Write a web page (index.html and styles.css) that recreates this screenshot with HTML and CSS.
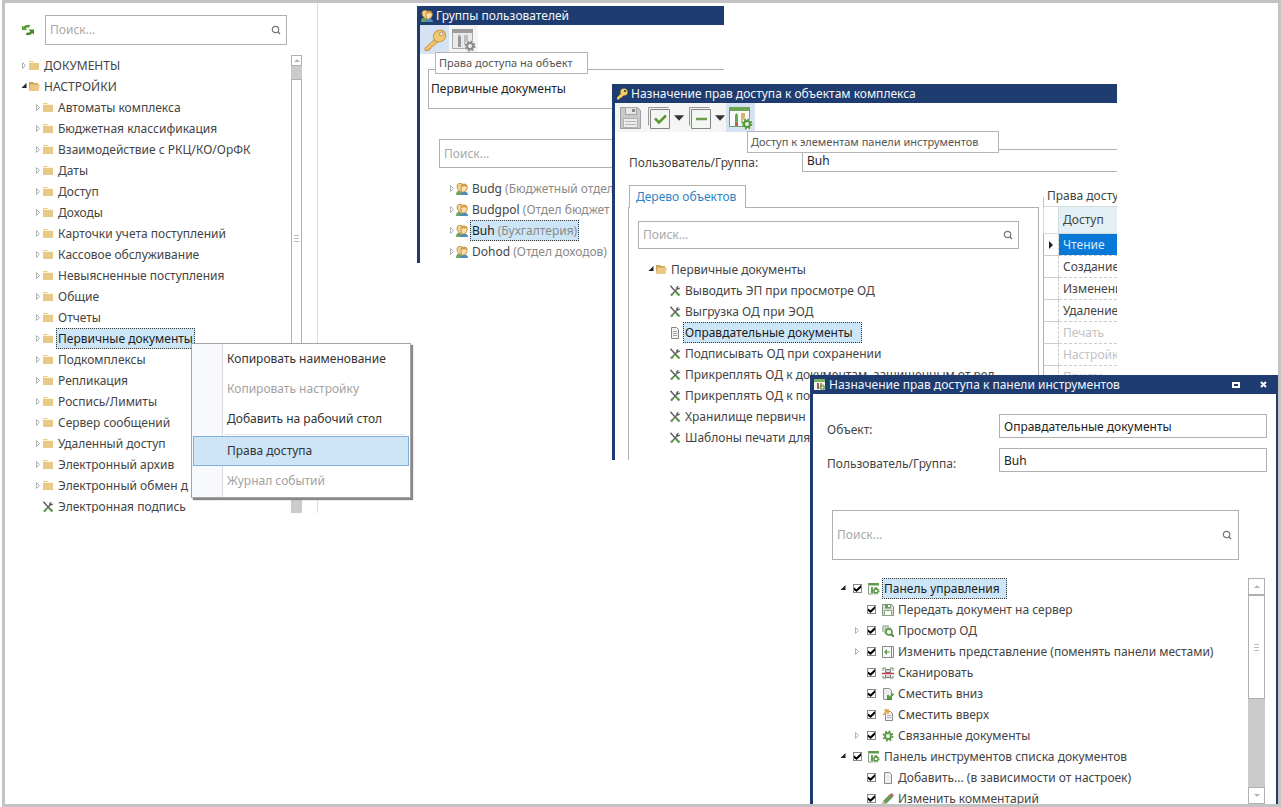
FILE: index.html
```html
<!DOCTYPE html>
<html lang="ru">
<head>
<meta charset="utf-8">
<title>Назначение прав доступа</title>
<link rel="stylesheet" href="styles.css">
</head>
<body>
<svg class="sprite" aria-hidden="true">
  <symbol id="closed" viewBox="0 0 8 12"><path d="M2.500 2.500v6l3-3z" fill="none" stroke="#b0b0b0"/></symbol>
  <symbol id="opened" viewBox="0 0 8 12"><path d="M6.500 2v5h-5z" fill="#222"/></symbol>
  <symbol id="folder" viewBox="0 1 12 12"><path d="M1 2h4l1 1h5v8H1z" fill="#e9c987"/><path d="M1 3.500h10" stroke="#fff4d8"/></symbol>
  <symbol id="folder-open" viewBox="0 1 12 12"><path d="M1 2h4l1 1h4v7H1z" fill="#cda45a"/><path d="M2.500 4.500H12L10.500 11H1z" fill="#ebc981"/></symbol>
  <symbol id="tools" viewBox="0 0 12 12"><path d="M2 1.500l8 8.500" stroke="#666" stroke-width="1.500"/><path d="M1 1l2 .5" stroke="#555"/><path d="M8.500 3.500L2 10.500" stroke="#666" stroke-width="1.500"/><path d="M7 3Q7.500 .8 10 1L8.800 2.300l1 1L11.300 2Q11 4.800 8.500 4.500z" fill="#555"/><path d="M7 7l3.500 3.500" stroke="#5c9a48" stroke-width="2.200"/><path d="M4 8.500l-2 2" stroke="#5c9a48" stroke-width="2"/></symbol>
  <symbol id="page" viewBox="0 0 12 12"><path d="M2.500.5h5l2 2v9h-7z" fill="#f2f2f2" stroke="#858585"/><path d="M4 4.500h4M4 6.500h4M4 8.500h4" stroke="#a5a5a5"/></symbol>
  <symbol id="page-plain" viewBox="0 0 12 12"><path d="M2.500.5h5l2 2v9h-7z" fill="#ededed" stroke="#8a8a8a"/></symbol>
  <symbol id="search" viewBox="0 0 12 12"><circle cx="5.500" cy="5.500" r="3.200" fill="none" stroke="#777" stroke-width="1.200"/><path d="M7.800 7.800L10 10" stroke="#777" stroke-width="1.500"/></symbol>
  <symbol id="refresh" viewBox="0 0 14 14"><path d="M1 7V2.500l1.500 1.200Q5 1 9.500 2.200L8 4.500Q5.500 4 4.700 5.600L6.200 7z" fill="#5b9d38"/><path d="M13 6.500V11.500l-1.700-1.300Q9 13 4.500 11.800L6 9.500Q8.500 10 9.300 8.400L7.500 6.500z" fill="#4a8a2c"/></symbol>
  <symbol id="users" viewBox="0 0 12 12"><path d="M0 12Q0 8 3 7.500L6 10v2z" fill="#6aa85a"/><path d="M4 12Q4 8.500 8 8.500T12 12z" fill="#4d8cba"/><path d="M1 4Q1 0 4 .5Q7-.5 6.500 5T3.500 8T1 4z" fill="#f3d192" stroke="#b5802f" stroke-width=".8"/><path d="M5 4.500Q4.500 1 8 1t3.300 3.500T8 9T5 4.500z" fill="#fae0b0" stroke="#b5802f" stroke-width=".8"/><path d="M5 4Q5 .5 8 .8T11.300 4Q8 2.500 5 4" fill="#d39b45"/></symbol>
  <symbol id="key" viewBox="0 0 24 24"><path d="M12.500 10.500L2 20v2.500h4v-2h2v-2h2l4.500-4.500z" fill="#efc468" stroke="#c2994f"/><ellipse cx="16.500" cy="8" rx="6.500" ry="5.800" transform="rotate(-40 16.500 8)" fill="#f1c970" stroke="#c2994f"/><circle cx="18.500" cy="6" r="2" fill="#dce6f4" stroke="#c2994f"/></symbol>
  <symbol id="key-small" viewBox="0 0 12 12"><path d="M6 4.500L1 9.500v2h2.500v-1.500H5L8 7z" fill="#f2cc54"/><circle cx="8" cy="4" r="3.600" fill="#f2cc54"/><circle cx="9" cy="3" r="1.100" fill="#1e3c70"/></symbol>
  <symbol id="gear" viewBox="0 0 12 12"><g fill="none" stroke="currentColor"><circle cx="6" cy="6" r="3" stroke-width="2"/><circle cx="6" cy="6" r="4.700" stroke-width="1.500" stroke-dasharray="2 1.690"/></g></symbol>
  <symbol id="panel-gray" viewBox="0 0 24 24"><path d="M.5 1.500h20v19H.5z" fill="#e9e9e9" stroke="#aaa"/><path d="M0 1h21v4H0z" fill="#9c9c9c"/><path d="M6 8.500l1.500-2L9 8.500V19H6z" fill="#999"/><path d="M12 7h4v12h-4z" fill="#bdbdbd"/><circle cx="18" cy="18" r="6" fill="#eee"/><use href="#gear" x="12" y="12" width="12" height="12" color="#888"/></symbol>
  <symbol id="panel" viewBox="0 0 24 24"><path d="M.5 1.500h20v19H.5z" fill="#f7faf6" stroke="#769b6c"/><path d="M0 1h21v4H0z" fill="#6aa653"/><path d="M6 9l1.500-2L9 9v8H6z" fill="#6aa653"/><path d="M6 17h3v3H6z" fill="#c75663"/><path d="M12 7h4v12h-4z" fill="#d3b56f"/><circle cx="18" cy="18" r="6" fill="#e6efed"/><use href="#gear" x="12" y="12" width="12" height="12" color="#559739"/></symbol>
  <symbol id="panel-small" viewBox="0 0 12 12"><path d="M0 0h11v2.500H0z" fill="#5f9a4e"/><path d="M.5 3v8h5" fill="#f5f8f3" stroke="#7d9976"/><path d="M3 4h2v6H3z" fill="#699c59"/><path d="M7 4h2v2H7z" fill="#b99b72"/><use href="#gear" x="4" y="4" width="8" height="8" color="#4f9438"/></symbol>
  <symbol id="panel-title" viewBox="0 0 12 12"><path d="M0 0h11v11H0z" fill="#f2f7ef"/><path d="M0 0h11v3H0z" fill="#79b25f"/><path d="M3 4h2v6H3z" fill="#a35c5c"/><path d="M6 4h2v4H6z" fill="#b99b72"/><use href="#gear" x="5" y="5" width="7" height="7" color="#4f9438"/></symbol>
  <symbol id="save-big" viewBox="0 0 22 22"><path d="M1.500.5h17l3 3v18h-20z" fill="#c8c8c8" stroke="#a0a0a0"/><path d="M6.500.5h11v7h-11z" fill="#e7e7e7" stroke="#a5a5a5"/><path d="M13 2h3v3h-3z" fill="#888"/><path d="M4.500 11.500h14v9h-14z" fill="#ededed" stroke="#b0b0b0"/><path d="M6 14.500h11M6 17.500h11" stroke="#b5b5b5"/></symbol>
  <symbol id="save-small" viewBox="0 0 12 12"><path d="M.5.5h9l2 2v9H.5z" fill="#d9e4d5" stroke="#7d967b"/><path d="M3 1h6v3.500H3z" fill="#759671"/><path d="M6 1h2v2H6z" fill="#fff"/><path d="M2.500 6.500h7v5h-7z" fill="#fff" stroke="#8aa586"/></symbol>
  <symbol id="check-all" viewBox="0 0 24 24"><path d="M1.500 19.500v-18h20" fill="none" stroke="#999"/><path d="M3.500 3.500h19v19h-19z" fill="#f4f6f3" stroke="#858585"/><path d="M8 12.500l4 4 7-7" fill="none" stroke="#5b982f" stroke-width="2.500"/></symbol>
  <symbol id="clear-all" viewBox="0 0 24 24"><path d="M1.500 19.500v-18h20" fill="none" stroke="#999"/><path d="M3.500 3.500h19v19h-19z" fill="#f4f6f3" stroke="#858585"/><path d="M8 13h11" stroke="#6a9c4a" stroke-width="2.500"/></symbol>
  <symbol id="down" viewBox="0 0 12 6"><path d="M0 0h11L5.500 6z" fill="#333"/></symbol>
  <symbol id="preview" viewBox="0 0 12 12"><path d="M1 7V1h6M3 9V3h6" fill="none" stroke="#75976b"/><circle cx="7" cy="7" r="3" fill="#f4faf0" stroke="#4f8d3b" stroke-width="1.400"/><path d="M9 9l3 3" stroke="#4f8d3b" stroke-width="2"/></symbol>
  <symbol id="layout" viewBox="0 0 12 12"><path d="M.5.5h11v11H.5zM9.500.5v11" fill="#fafafa" stroke="#828b7f"/><path d="M2 6l3-3v2.500h3v1H5V9z" fill="#5d9947"/></symbol>
  <symbol id="scan" viewBox="0 0 12 12"><path d="M1 4V1h3M8 1h3v3M1 9v2h3M8 11h3V9" fill="none" stroke="#668c5a"/><path d="M3.500 2.500h5v3h-5zM3.500 8v2.500h5V8" fill="#ddd" stroke="#777"/><path d="M0 6.500h12" stroke="#ce3e4b" stroke-width="1.600"/></symbol>
  <symbol id="move-down" viewBox="0 0 12 12"><path d="M1.500.5h6l2 2v9h-8z" fill="#ececec" stroke="#909090"/><path d="M11 5L7 9V7H5v5h5v-2H8.500L12 6.500z" fill="#4f983a"/></symbol>
  <symbol id="move-up" viewBox="0 0 12 12"><path d="M3.500 2.500h5l2 2v7h-7z" fill="#f2f2f2" stroke="#878787"/><path d="M5 8.500h4M5 6.500h4" stroke="#aaa"/><path d="M1 6l4-4M2 1h4v4" fill="none" stroke="#dea443" stroke-width="1.700"/></symbol>
  <symbol id="pencil" viewBox="0 0 12 12"><path d="M.5 11.500l1-3.500 6.500-6.500 2.500 2.500L4 10.500z" fill="#6a9e55" stroke="#4d6d42" stroke-width=".7"/><path d="M8 1.500L9.500 0 12 2.500 10.500 4z" fill="#c65b61"/><path d="M.5 11.500l1-3.500L4 10.500z" fill="#e3c391"/></symbol>
  <symbol id="current" viewBox="0 0 6 8"><path d="M1 0v8l4-4z" fill="#222"/></symbol>
  <symbol id="up-mark" viewBox="0 0 6 4"><path d="M0 3h6L3 0z" fill="#b5b5b5"/></symbol>
  <symbol id="down-mark" viewBox="0 0 6 4"><path d="M0 0h6L3 3z" fill="#b5b5b5"/></symbol>
</svg>

<main class="desktop">
  <aside class="navigator">
    <div class="navigator-head">
      <button class="plain" aria-label="Обновить"><svg class="i14"><use href="#refresh"/></svg></button>
      <label class="search search-nav"><input type="text" placeholder="Поиск..." aria-label="Поиск по настройкам"><svg class="i12"><use href="#search"/></svg></label>
    </div>
    <div class="navigator-body">
      <ul class="tree">
        <li class="row"><svg class="arrow"><use href="#closed"/></svg><svg class="i12"><use href="#folder"/></svg><span class="name">ДОКУМЕНТЫ</span></li>
        <li class="row"><svg class="arrow"><use href="#opened"/></svg><svg class="i12"><use href="#folder-open"/></svg><span class="name">НАСТРОЙКИ</span></li>
        <li class="row sub"><svg class="arrow"><use href="#closed"/></svg><svg class="i12"><use href="#folder"/></svg><span class="name">Автоматы комплекса</span></li>
        <li class="row sub"><svg class="arrow"><use href="#closed"/></svg><svg class="i12"><use href="#folder"/></svg><span class="name">Бюджетная классификация</span></li>
        <li class="row sub"><svg class="arrow"><use href="#closed"/></svg><svg class="i12"><use href="#folder"/></svg><span class="name">Взаимодействие с РКЦ/КО/ОрФК</span></li>
        <li class="row sub"><svg class="arrow"><use href="#closed"/></svg><svg class="i12"><use href="#folder"/></svg><span class="name">Даты</span></li>
        <li class="row sub"><svg class="arrow"><use href="#closed"/></svg><svg class="i12"><use href="#folder"/></svg><span class="name">Доступ</span></li>
        <li class="row sub"><svg class="arrow"><use href="#closed"/></svg><svg class="i12"><use href="#folder"/></svg><span class="name">Доходы</span></li>
        <li class="row sub"><svg class="arrow"><use href="#closed"/></svg><svg class="i12"><use href="#folder"/></svg><span class="name">Карточки учета поступлений</span></li>
        <li class="row sub"><svg class="arrow"><use href="#closed"/></svg><svg class="i12"><use href="#folder"/></svg><span class="name">Кассовое обслуживание</span></li>
        <li class="row sub"><svg class="arrow"><use href="#closed"/></svg><svg class="i12"><use href="#folder"/></svg><span class="name">Невыясненные поступления</span></li>
        <li class="row sub"><svg class="arrow"><use href="#closed"/></svg><svg class="i12"><use href="#folder"/></svg><span class="name">Общие</span></li>
        <li class="row sub"><svg class="arrow"><use href="#closed"/></svg><svg class="i12"><use href="#folder"/></svg><span class="name">Отчеты</span></li>
        <li class="row sub"><svg class="arrow"><use href="#closed"/></svg><svg class="i12"><use href="#folder"/></svg><span class="name selected">Первичные документы</span></li>
        <li class="row sub"><svg class="arrow"><use href="#closed"/></svg><svg class="i12"><use href="#folder"/></svg><span class="name">Подкомплексы</span></li>
        <li class="row sub"><svg class="arrow"><use href="#closed"/></svg><svg class="i12"><use href="#folder"/></svg><span class="name">Репликация</span></li>
        <li class="row sub"><svg class="arrow"><use href="#closed"/></svg><svg class="i12"><use href="#folder"/></svg><span class="name">Роспись/Лимиты</span></li>
        <li class="row sub"><svg class="arrow"><use href="#closed"/></svg><svg class="i12"><use href="#folder"/></svg><span class="name">Сервер сообщений</span></li>
        <li class="row sub"><svg class="arrow"><use href="#closed"/></svg><svg class="i12"><use href="#folder"/></svg><span class="name">Удаленный доступ</span></li>
        <li class="row sub"><svg class="arrow"><use href="#closed"/></svg><svg class="i12"><use href="#folder"/></svg><span class="name">Электронный архив</span></li>
        <li class="row sub"><svg class="arrow"><use href="#closed"/></svg><svg class="i12"><use href="#folder"/></svg><span class="name">Электронный обмен д</span></li>
        <li class="row sub"><span class="arrow"></span><svg class="i12"><use href="#tools"/></svg><span class="name">Электронная подпись</span></li>
      </ul>
      <div class="scroll scroll-nav" aria-hidden="true"><span class="cap"><svg class="mark"><use href="#up-mark"/></svg></span><span class="thumb"><i class="grip"></i></span></div>
    </div>
  </aside>

  <section class="window win-groups">
    <header class="title"><svg class="i12"><use href="#users"/></svg>Группы пользователей</header>
    <div class="toolbar">
      <button class="tool active" aria-label="Права доступа на объект"><svg class="i24"><use href="#key"/></svg></button>
      <button class="tool" aria-label="Элементы панели инструментов"><svg class="i24"><use href="#panel-gray"/></svg></button>
    </div>
    <div class="object-box">Первичные документы</div>
    <label class="search search-groups"><input type="text" placeholder="Поиск..." aria-label="Поиск группы"></label>
    <ul class="tree tree-groups">
      <li class="row"><svg class="arrow"><use href="#closed"/></svg><svg class="i12"><use href="#users"/></svg><span class="name">Budg <span class="note">(Бюджетный отдел)</span></span></li>
      <li class="row"><svg class="arrow"><use href="#closed"/></svg><svg class="i12"><use href="#users"/></svg><span class="name">Budgpol <span class="note">(Отдел бюджет</span></span></li>
      <li class="row"><svg class="arrow"><use href="#closed"/></svg><svg class="i12"><use href="#users"/></svg><span class="name selected">Buh <span class="note">(Бухгалтерия)</span></span></li>
      <li class="row"><svg class="arrow"><use href="#closed"/></svg><svg class="i12"><use href="#users"/></svg><span class="name">Dohod <span class="note">(Отдел доходов)</span></span></li>
    </ul>
    <div class="tip tip-object" role="tooltip">Права доступа на объект</div>
  </section>

  <section class="window win-objects">
    <header class="title"><svg class="i12"><use href="#key-small"/></svg>Назначение прав доступа к объектам комплекса</header>
    <div class="toolbar">
      <button class="tool" aria-label="Сохранить"><svg class="i22"><use href="#save-big"/></svg></button>
      <button class="tool" aria-label="Отметить все"><svg class="i24"><use href="#check-all"/></svg></button>
      <button class="tool drop" aria-label="Варианты отметки"><svg class="down"><use href="#down"/></svg></button>
      <button class="tool" aria-label="Снять отметки"><svg class="i24"><use href="#clear-all"/></svg></button>
      <button class="tool drop" aria-label="Варианты снятия"><svg class="down"><use href="#down"/></svg></button>
      <button class="tool active" aria-label="Доступ к элементам панели инструментов"><svg class="i24"><use href="#panel"/></svg></button>
    </div>
    <div class="user-line">
      <label for="user3">Пользователь/Группа:</label>
      <input id="user3" class="field" type="text" value="Buh">
    </div>
    <div class="columns">
      <div class="tabs">
        <button class="tab">Дерево объектов</button>
        <div class="tab-page">
          <label class="search search-objects"><input type="text" placeholder="Поиск..." aria-label="Поиск объекта"><svg class="i12"><use href="#search"/></svg></label>
          <ul class="tree tree-objects">
            <li class="row"><svg class="arrow"><use href="#opened"/></svg><svg class="i12"><use href="#folder-open"/></svg><span class="name">Первичные документы</span></li>
            <li class="row sub"><span class="arrow"></span><svg class="i12"><use href="#tools"/></svg><span class="name">Выводить ЭП при просмотре ОД</span></li>
            <li class="row sub"><span class="arrow"></span><svg class="i12"><use href="#tools"/></svg><span class="name">Выгрузка ОД при ЭОД</span></li>
            <li class="row sub"><span class="arrow"></span><svg class="i12"><use href="#page"/></svg><span class="name selected wide">Оправдательные документы</span></li>
            <li class="row sub"><span class="arrow"></span><svg class="i12"><use href="#tools"/></svg><span class="name">Подписывать ОД при сохранении</span></li>
            <li class="row sub"><span class="arrow"></span><svg class="i12"><use href="#tools"/></svg><span class="name">Прикреплять ОД к документам, защищенным от ред</span></li>
            <li class="row sub"><span class="arrow"></span><svg class="i12"><use href="#tools"/></svg><span class="name">Прикреплять ОД к по</span></li>
            <li class="row sub"><span class="arrow"></span><svg class="i12"><use href="#tools"/></svg><span class="name">Хранилище первичн</span></li>
            <li class="row sub"><span class="arrow"></span><svg class="i12"><use href="#tools"/></svg><span class="name">Шаблоны печати для</span></li>
          </ul>
        </div>
      </div>
      <div class="rights">
        <div class="legend">Права доступа</div>
        <table class="grid">
          <thead><tr><th class="mark-col"></th><th>Доступ</th></tr></thead>
          <tbody>
            <tr class="current"><td class="mark-col"><svg class="current-mark"><use href="#current"/></svg></td><td>Чтение</td></tr>
            <tr><td class="mark-col"></td><td>Создание</td></tr>
            <tr><td class="mark-col"></td><td>Изменение</td></tr>
            <tr><td class="mark-col"></td><td>Удаление</td></tr>
            <tr class="off"><td class="mark-col"></td><td>Печать</td></tr>
            <tr class="off"><td class="mark-col"></td><td>Настройка</td></tr>
            <tr class="off"><td class="mark-col"></td><td>Прием</td></tr>
          </tbody>
        </table>
      </div>
    </div>
    <div class="tip tip-panel" role="tooltip">Доступ к элементам панели инструментов</div>
  </section>

  <section class="window win-panel">
    <header class="title"><svg class="i12"><use href="#panel-title"/></svg><span class="grow">Назначение прав доступа к панели инструментов</span>
      <button class="win-btn" aria-label="Развернуть"><svg class="i8"><path d="M1 2h6v4H1z" fill="none" stroke="#fff" stroke-width="2"/></svg></button>
      <button class="win-btn" aria-label="Закрыть"><svg class="i8"><path d="M1 1l5 5M6 1L1 6" stroke="#fff" stroke-width="2"/></svg></button>
    </header>
    <div class="form">
      <label for="object4">Объект:</label><input id="object4" class="field" type="text" value="Оправдательные документы">
      <label for="user4">Пользователь/Группа:</label><input id="user4" class="field" type="text" value="Buh">
    </div>
    <label class="search search-panel"><input type="text" placeholder="Поиск..." aria-label="Поиск элемента"><svg class="i12"><use href="#search"/></svg></label>
    <div class="panel-body">
      <ul class="tree tree-panel">
        <li class="row"><svg class="arrow"><use href="#opened"/></svg><input class="tick" type="checkbox" id="c1" checked><svg class="i12"><use href="#panel-small"/></svg><label class="name selected near" for="c1">Панель управления</label></li>
        <li class="row sub"><span class="arrow"></span><input class="tick" type="checkbox" id="c2" checked><svg class="i12"><use href="#save-small"/></svg><label class="name" for="c2">Передать документ на сервер</label></li>
        <li class="row sub"><svg class="arrow"><use href="#closed"/></svg><input class="tick" type="checkbox" id="c3" checked><svg class="i12"><use href="#preview"/></svg><label class="name" for="c3">Просмотр ОД</label></li>
        <li class="row sub"><svg class="arrow"><use href="#closed"/></svg><input class="tick" type="checkbox" id="c4" checked><svg class="i12"><use href="#layout"/></svg><label class="name" for="c4">Изменить представление (поменять панели местами)</label></li>
        <li class="row sub"><span class="arrow"></span><input class="tick" type="checkbox" id="c5" checked><svg class="i12"><use href="#scan"/></svg><label class="name" for="c5">Сканировать</label></li>
        <li class="row sub"><span class="arrow"></span><input class="tick" type="checkbox" id="c6" checked><svg class="i12"><use href="#move-down"/></svg><label class="name" for="c6">Сместить вниз</label></li>
        <li class="row sub"><span class="arrow"></span><input class="tick" type="checkbox" id="c7" checked><svg class="i12"><use href="#move-up"/></svg><label class="name" for="c7">Сместить вверх</label></li>
        <li class="row sub"><svg class="arrow"><use href="#closed"/></svg><input class="tick" type="checkbox" id="c8" checked><svg class="i12 green"><use href="#gear"/></svg><label class="name" for="c8">Связанные документы</label></li>
        <li class="row"><svg class="arrow"><use href="#opened"/></svg><input class="tick" type="checkbox" id="c9" checked><svg class="i12"><use href="#panel-small"/></svg><label class="name" for="c9">Панель инструментов списка документов</label></li>
        <li class="row sub"><span class="arrow"></span><input class="tick" type="checkbox" id="c10" checked><svg class="i12"><use href="#page-plain"/></svg><label class="name" for="c10">Добавить... (в зависимости от настроек)</label></li>
        <li class="row sub"><span class="arrow"></span><input class="tick" type="checkbox" id="c11" checked><svg class="i12"><use href="#pencil"/></svg><label class="name" for="c11">Изменить комментарий</label></li>
      </ul>
      <div class="scroll scroll-panel" aria-hidden="true"><span class="cap"><svg class="mark"><use href="#up-mark"/></svg></span><span class="thumb"><i class="grip"></i></span><span class="cap last"><svg class="mark"><use href="#down-mark"/></svg></span></div>
    </div>
  </section>

  <nav class="menu">
    <button class="item">Копировать наименование</button>
    <button class="item" disabled>Копировать настройку</button>
    <button class="item">Добавить на рабочий стол</button>
    <hr>
    <button class="item hot">Права доступа</button>
    <button class="item" disabled>Журнал событий</button>
  </nav>
</main>
</body>
</html>
```
FILE: styles.css
```css
* { box-sizing: border-box; }
html, body { height: 100%; }
body { margin: 0; background: #fff; color: #444; font: 12px/20px "Noto Sans", "Open Sans", sans-serif; }
button, input { font: inherit; color: inherit; margin: 0; }
button { border: 0; padding: 0; background: none; }
ul { list-style: none; margin: 0; padding: 0; }
svg { display: block; flex: none; }
.sprite { position: absolute; width: 0; height: 0; }

.desktop { position: relative; height: 100vh; min-height: 807px; overflow: hidden; }
.desktop::after { content: ""; position: absolute; inset: 0 0 0 2px; border: 3px solid #c3c3c3; pointer-events: none; }

.i8 { width: 8px; height: 8px; }
.i12 { width: 12px; height: 12px; }
.i14 { width: 14px; height: 14px; }
.i22 { width: 22px; height: 22px; }
.i24 { width: 24px; height: 24px; }
.green { color: #5b9a49; }

/* Search boxes and text fields */
.search { display: flex; align-items: center; border: 1px solid #b0b0b0; background: #fff; padding: 0 4px; }
.search input { flex: 1; min-width: 0; border: 0; outline: 0; padding: 0; background: none; }
.search input::placeholder { color: #a8a8a8; opacity: 1; }
.field { min-width: 0; height: 24px; border: 1px solid #b0b0b0; border-radius: 0; background: #fff; padding: 0 4px; color: #222; }

/* Trees */
.row { display: flex; align-items: center; height: 21px; white-space: nowrap; }
.row.sub { padding-left: 14px; }
.arrow { width: 8px; height: 12px; flex: none; }
.name { margin-left: 2px; height: 21px; line-height: 19px; padding: 0 1px; border: 1px solid transparent; }
.name.selected { background: #cde6f7; border: 1px dotted #333; color: #1c1c1c; }
.name.wide { padding-right: 8px; }
.name.near { padding-right: 6px; }
.note { color: #8a8a8a; }
.tick { appearance: none; flex: none; width: 9px; height: 9px; margin: 0 6px; border: 1px solid #888; background: #fff; }
.tick:checked::before { content: ""; display: block; width: 7px; height: 7px; background: #000; clip-path: polygon(0 35%, 35% 62%, 100% 0, 100% 38%, 38% 100%, 0 72%); }

/* Scroll bars */
.scroll { display: flex; flex-direction: column; flex: none; background: #cbcbcb; }
.cap { display: flex; align-items: center; justify-content: center; background: #fff; border: 1px solid #b0b0b0; }
.mark { width: 6px; height: 4px; }
.thumb { display: flex; align-items: center; justify-content: center; background: #fff; border: 1px solid #b0b0b0; }
.grip { width: 5px; height: 7px; background: repeating-linear-gradient(#bbb 0 1px, #fff 1px 3px); }
.last { margin-top: auto; }

/* Navigator */
.navigator { position: absolute; left: 5px; top: 3px; width: 313px; height: 510px; border-right: 1px solid #ddd; overflow: hidden; display: flex; flex-direction: column; }
.navigator-head { display: flex; align-items: center; gap: 10px; padding: 12px 30px 0 16px; }
.search-nav { flex: 1; height: 30px; }
.navigator-body { display: flex; flex: 1; min-height: 0; padding: 10px 15px 0; }
.navigator-body .tree { flex: 1; min-width: 0; }
.scroll-nav { width: 11px; }
.scroll-nav .cap { height: 11px; }
.scroll-nav .thumb { height: 319px; margin-top: 13px; }

/* Context menu */
.menu { position: absolute; left: 191px; top: 343px; width: 220px; display: flex; flex-direction: column; padding: 0 1px 1px; border: 1px solid #a5a5a5; background: linear-gradient(90deg, #f7f9fc 30px, #dadada 30px 31px, #fff 31px); box-shadow: 2px 2px 1px #888; }
.item { height: 30px; padding: 0 0 0 33px; text-align: left; color: #333; border: 1px solid transparent; }
.item:disabled { color: #a2a2a2; }
.item.hot { background: #cde5f7; border-color: #82aedb; }
.menu hr { height: 1px; margin: 0 4px 1px 32px; border: 0; background: #e3e3e3; }

/* Windows */
.window { position: absolute; display: flex; flex-direction: column; overflow: hidden; background: #fff; border-left: 3px solid #1e3c70; }
.title { display: flex; align-items: center; gap: 3px; flex: none; height: 19px; padding-left: 1px; background: #1e3c70; color: #f4f7fb; line-height: 19px; white-space: nowrap; }
.grow { flex: 1; }
.toolbar { display: flex; flex: none; align-self: flex-start; height: 29px; background: #f5f5f5; }
.tool { display: flex; align-items: center; justify-content: center; width: 29px; }
.tool.active { background: #d5e2f3; }
.tool.drop { width: 12px; }
.down { width: 11px; height: 6px; }
.tip { position: absolute; height: 22px; padding: 0 3px; border: 1px solid #b5b5b5; background: #fff; color: #555; font-size: 11px; white-space: nowrap; }

.win-groups { left: 417px; top: 6px; width: 307px; height: 257px; }
.object-box { flex: none; height: 40px; margin: 15px 0 0 8px; padding: 9px 2px; border: 1px solid #b0b0b0; border-right: 0; color: #222; }
.search-groups { flex: none; height: 29px; margin: 30px 0 10px 19px; }
.tree-groups { padding-left: 28px; }
.tip-object { left: 15px; top: 46px; width: 153px; }

.win-objects { left: 612px; top: 84px; width: 505px; height: 376px; }
.user-line { display: flex; flex: none; align-items: flex-start; gap: 32px; height: 24px; margin-top: 17px; padding-left: 14px; }
.user-line label { flex: none; width: 141px; padding-top: 4px; }
.user-line .field { flex: 1; height: 23px; border-right: 0; }
.columns { display: flex; flex: 1; min-height: 0; margin-top: 12px; }
.tabs { display: flex; flex-direction: column; width: 411px; margin-left: 13px; flex: none; }
.tab { flex: none; align-self: flex-start; width: 117px; height: 23px; margin: 0 0 -1px 1px; padding: 0 6px; border: 1px solid #b0b0b0; border-bottom: 0; background: #fff; color: #2d83c4; text-align: left; white-space: nowrap; z-index: 1; }
.tab-page { flex: 1; min-height: 0; overflow: hidden; border: 1px solid #b0b0b0; border-bottom: 0; padding: 13px 19px 0 9px; }
.search-objects { height: 28px; }
.tree-objects { padding: 10px 0 0 9px; }
.rights { flex: 1; min-width: 0; overflow: hidden; margin-left: 4px; white-space: nowrap; }
.legend { display: flex; gap: 3px; height: 21px; line-height: 22px; }
.legend::before { content: ""; width: 3px; height: 9px; margin-top: 12px; border: solid #c5c5c5; border-width: 1px 0 0 1px; }
.grid { border-collapse: collapse; width: 100%; table-layout: fixed; border-left: 1px solid #b0b0b0; }
.grid th, .grid td { height: 22px; padding: 0 4px; text-align: left; font-weight: 400; line-height: 20px; overflow: hidden; border: 1px dashed #ccc; border-right: 0; }
.grid th { height: 27px; background: #e2eff5; border-style: solid; border-color: #cfdde3; }
.grid .mark-col { width: 15px; padding: 0 4px; background: #fff; border-top-style: solid; }
.current-mark { width: 6px; height: 8px; }
.grid .current td:last-child { background: #0a78d7; color: #d8ecff; }
.grid .off td { color: #c2c2c2; }
.tip-panel { left: 132px; top: 47px; width: 252px; }

.win-panel { left: 810px; top: 375px; right: 3px; bottom: 3px; border-right: 2px solid #1e3c70; }
.win-btn { display: flex; align-items: center; justify-content: center; width: 25px; height: 19px; }
.form { display: grid; flex: none; grid-template-columns: 156px 1fr; grid-auto-rows: 24px; column-gap: 16px; row-gap: 10px; padding: 20px 9px 0 14px; }
.form label { padding-top: 6px; }
.search-panel { flex: none; height: 50px; margin: 38px 37px 0 19px; }
.search-panel .i12 { margin-right: 1px; }
.panel-body { display: flex; flex: 1; min-height: 0; padding: 18px 11px 0 26px; }
.panel-body .tree { flex: 1; min-width: 0; }
.scroll-panel { width: 17px; }
.scroll-panel .cap { height: 17px; }
.scroll-panel .thumb { height: 104px; }
```
